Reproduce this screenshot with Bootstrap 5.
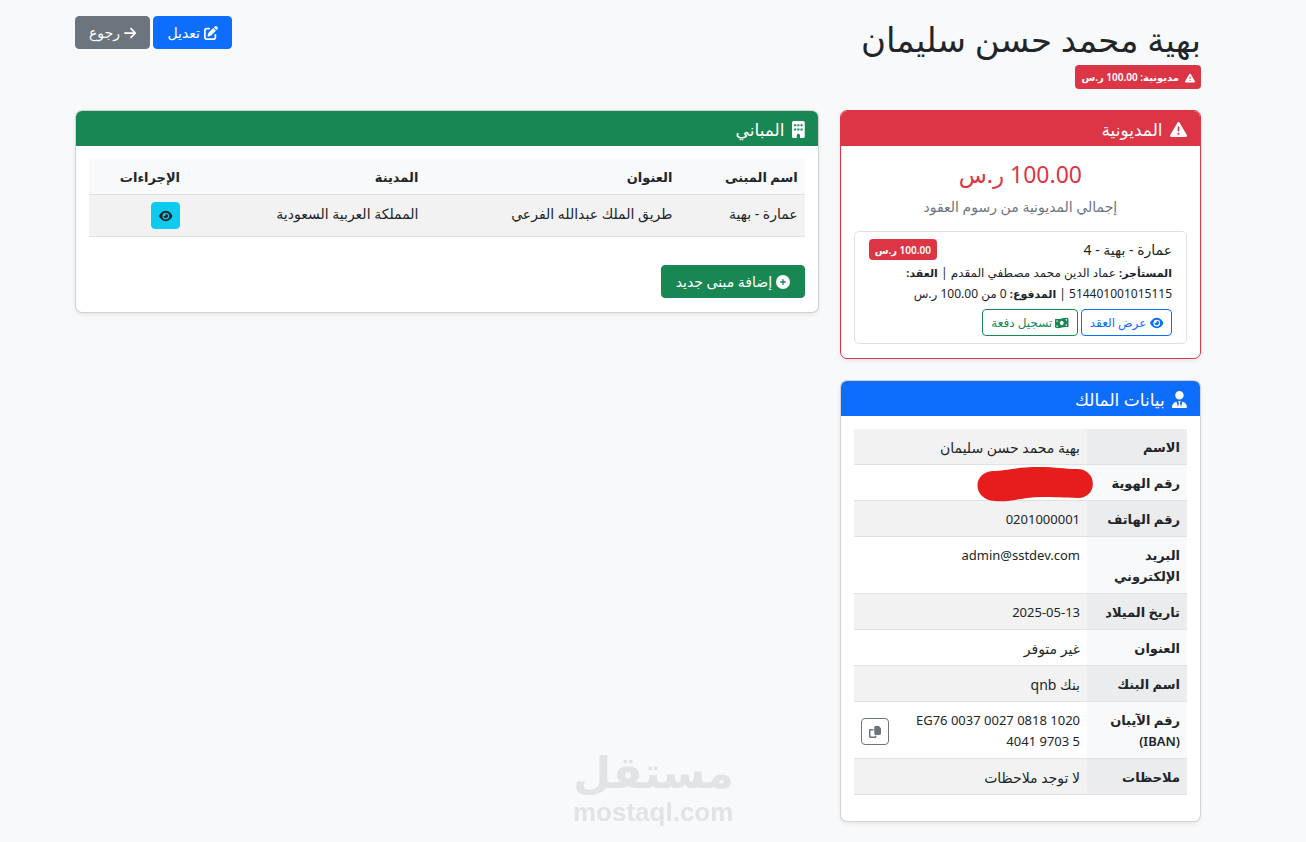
<!DOCTYPE html>
<html lang="ar" dir="rtl">
<head>
<meta charset="utf-8">
<meta name="viewport" content="width=device-width, initial-scale=1">
<title>بهية محمد حسن سليمان</title>
<link href="https://cdn.jsdelivr.net/npm/bootstrap@5.3.0/dist/css/bootstrap.min.css" rel="stylesheet">
<style>
html{font-size:14px}
body{background:#f8f9fb;font-family:"Noto Sans","DejaVu Sans",sans-serif;line-height:21px;text-align:right}
h1,h2,h3{font-weight:400!important}
.page-wrap{padding:16px 105px 20px 75px}
.ico{height:1em;width:auto;fill:currentColor;vertical-align:-2px;overflow:visible}
.owner-name{font-size:34px;line-height:46px;margin-bottom:3px}
.debt-tag{font-size:10px;font-weight:600;line-height:14px;padding:5px 6px;border-radius:4px}
.debt-tag .ico{margin-left:6px}
.btn{line-height:21px;padding:5px 13px;font-size:14px;border-radius:4px}
.btn-add{padding:5px 14px}
.btn-mini{font-size:12px;line-height:19px;padding:3px 7px}
.btn-info{--bs-btn-color:#212529}
.panel{border-radius:7px;box-shadow:0 2px 4px rgba(0,0,0,.075);margin-bottom:21px;overflow:hidden}
.panel .card-header{padding:8px 13px 6px;border:0}
.panel .card-header h2{font-size:17px;line-height:21px;margin:0}
.panel .card-header .ico{margin-left:3px}
.panel .card-body{padding:13px 13px 14px}
.total{font-size:23px;line-height:31px;margin-bottom:6px}
.debt-item{border:1px solid #dee2e6;border-radius:5px;padding:7px 14px}
.debt-note{font-size:12px;line-height:21px;margin:2px 0 5px}
.debt-note strong{font-size:11px}
.debt-actions{gap:3px}
.debt-actions .btn{padding:3px 8px}
.table{margin-bottom:12px}
.table td,.table th{padding:8px 7px 6px}
.table th{font-size:13px;font-weight:600;color:#212529}
.buildings .btn{margin-top:-1px;margin-bottom:1px}
.fields th{width:30%;background-color:#f8f9fb}
.latin{font-size:13px}
.buildings{margin-bottom:28px}
.w-name{width:17.5%}.w-addr{width:35.5%}.w-city{width:33.3%}
.redact{position:absolute;right:-13px;top:-6px;width:116px;height:35px;fill:#e71d1d}
.mark-logo{position:fixed;left:573px;bottom:17px;width:158px;color:#e1e4e4;font-weight:700;text-align:center;direction:ltr}
.mark-ar{font-family:"DejaVu Sans",sans-serif;font-size:44px;line-height:52px}
.mark-en{font-family:"Liberation Sans",sans-serif;font-size:26px;line-height:26px}
</style>
</head>
<body>
<svg width="0" height="0" class="position-absolute" aria-hidden="true">
<symbol id="warn" viewBox="0 0 512 512"><path d="M256 32c14.2 0 27.3 7.5 34.5 19.8l216 368c7.3 12.4 7.3 27.7 .2 40.1S486.3 480 472 480H40c-14.3 0-27.6-7.7-34.7-20.1s-7-27.8 .2-40.1l216-368C228.7 39.5 241.8 32 256 32zm0 128c-13.3 0-24 10.7-24 24V296c0 13.3 10.7 24 24 24s24-10.7 24-24V184c0-13.3-10.7-24-24-24zm32 224a32 32 0 1 0 -64 0 32 32 0 1 0 64 0z"/></symbol>
<symbol id="eye" viewBox="0 0 576 512"><path d="M288 32c-80.8 0-145.5 36.8-192.6 80.6C48.6 156 17.3 208 2.5 243.7c-3.3 7.9-3.3 16.7 0 24.6C17.3 304 48.6 356 95.4 399.4C142.5 443.2 207.2 480 288 480s145.5-36.8 192.6-80.6c46.8-43.5 78.1-95.4 93-131.1c3.3-7.9 3.3-16.7 0-24.6c-14.9-35.7-46.2-87.7-93-131.1C433.5 68.8 368.8 32 288 32zM144 256a144 144 0 1 1 288 0 144 144 0 1 1 -288 0zm144-64c0 35.3-28.7 64-64 64c-7.1 0-13.9-1.2-20.3-3.3c-5.5-1.8-11.9 1.6-11.7 7.4c.3 6.9 1.3 13.8 3.2 20.7c13.7 51.2 66.4 81.6 117.6 67.9s81.6-66.4 67.9-117.6c-11.1-41.5-47.8-69.4-88.6-71.1c-5.8-.2-9.2 6.1-7.4 11.7c2.1 6.4 3.3 13.2 3.3 20.3z"/></symbol>
</svg>
<main class="container-fluid page-wrap">
<header class="d-flex justify-content-between align-items-start mb-4">
<div class="d-flex flex-column align-items-start">
<h1 class="owner-name">بهية محمد حسن سليمان</h1>
<span class="badge text-bg-danger debt-tag"><svg class="ico" viewBox="0 0 512 512"><use href="#warn"/></svg>مديونية: 100.00 ر.س</span>
</div>
<div class="d-flex gap-1">
<button type="button" class="btn btn-primary"><svg class="ico" viewBox="0 0 512 512"><path d="M471.6 21.7c-21.9-21.9-57.3-21.9-79.2 0L362.3 51.7l97.9 97.9 30.1-30.1c21.9-21.9 21.9-57.3 0-79.2L471.6 21.7zm-299.2 220c-6.1 6.1-10.8 13.6-13.5 21.9l-29.6 88.8c-2.9 8.6-.6 18.1 5.8 24.6s15.9 8.7 24.6 5.8l88.8-29.6c8.2-2.7 15.7-7.4 21.9-13.5L437.7 172.3 339.7 74.3 172.4 241.7zM96 64C43 64 0 107 0 160V416c0 53 43 96 96 96H352c53 0 96-43 96-96V320c0-17.7-14.3-32-32-32s-32 14.3-32 32v96c0 17.7-14.3 32-32 32H96c-17.7 0-32-14.3-32-32V160c0-17.7 14.3-32 32-32h96c17.7 0 32-14.3 32-32s-14.3-32-32-32H96z"/></svg> تعديل</button>
<button type="button" class="btn btn-secondary"><svg class="ico" viewBox="0 0 448 512"><path d="M438.6 278.6c12.5-12.5 12.5-32.8 0-45.3l-160-160c-12.5-12.5-32.8-12.5-45.3 0s-12.5 32.8 0 45.3L338.8 224 32 224c-17.7 0-32 14.3-32 32s14.3 32 32 32l306.7 0L233.4 393.4c-12.5 12.5-12.5 32.8 0 45.3s32.8 12.5 45.3 0l160-160z"/></svg> رجوع</button>
</div>
</header>
<div class="row">
<div class="col-4">
<section class="card panel border-danger">
<div class="card-header text-bg-danger"><h2><svg class="ico" viewBox="0 0 512 512"><use href="#warn"/></svg> المديونية</h2></div>
<div class="card-body">
<div class="text-center mb-3"><h3 class="total text-danger">100.00 ر.س</h3><p class="text-secondary mb-0">إجمالي المديونية من رسوم العقود</p></div>
<div class="debt-item">
<div class="d-flex justify-content-between"><span>عمارة - بهية - 4</span><span class="badge text-bg-danger debt-tag py-1">100.00 ر.س</span></div>
<p class="debt-note"><strong>المستأجر:</strong> عماد الدين محمد مصطفي المقدم | <strong>العقد:</strong> 514401001015115 | <strong>المدفوع:</strong> 0 من 100.00 ر.س</p>
<div class="d-flex debt-actions">
<button type="button" class="btn btn-mini btn-outline-primary"><svg class="ico" viewBox="0 0 576 512"><use href="#eye"/></svg> عرض العقد</button>
<button type="button" class="btn btn-mini btn-outline-success"><svg class="ico" viewBox="0 0 576 512"><path d="M0 112.5V422.3c0 18 10.1 35 27 41.3c87 32.5 174 10.3 261-11.9c79.8-20.3 159.6-40.7 239.3-18.9c23 6.3 48.7-9.5 48.7-33.4V89.7c0-18-10.1-35-27-41.3C462 15.9 375 38.1 288 60.3C208.2 80.6 128.4 100.9 48.7 79.1C25.6 72.8 0 88.6 0 112.5zM288 352c-44.2 0-80-43-80-96s35.8-96 80-96s80 43 80 96s-35.8 96-80 96zM64 352c35.3 0 64 28.7 64 64H64V352zm64-208c0 35.3-28.7 64-64 64V144h64zM512 304v64H448c0-35.3 28.7-64 64-64zM448 96h64v64c-35.3 0-64-28.7-64-64z" fill-rule="evenodd"/></svg> تسجيل دفعة</button>
</div>
</div>
</div>
</section>
<section class="card panel mb-0">
<div class="card-header text-bg-primary"><h2><svg class="ico" viewBox="0 0 448 512"><path d="M96 128a128 128 0 1 0 256 0A128 128 0 1 0 96 128zm94.5 200.2l18.6 31L175.8 483.1l-36-146.9c-2-8.1-9.8-13.4-17.9-11.3C51.9 342.4 0 405.8 0 481.3c0 17 13.8 30.7 30.7 30.7H417.3c17 0 30.7-13.8 30.7-30.7c0-75.5-51.9-138.9-121.9-156.4c-8.1-2-15.9 3.3-17.9 11.3l-36 146.9L238.9 359.2l18.6-31c6.4-10.7-1.3-24.2-13.7-24.2H204.3c-12.4 0-20.1 13.6-13.7 24.2z"/></svg> بيانات المالك</h2></div>
<div class="card-body">
<table class="table table-striped fields">
<tbody>
<tr><th scope="row">الاسم</th><td>بهية محمد حسن سليمان</td></tr>
<tr><th scope="row">رقم الهوية</th><td><div class="position-relative">&nbsp;<svg class="redact" viewBox="0 0 116 35"><path d="M16 4C28 4 38 0 62 0C80 0 86 2 100 2C121 2 121 31 101 31C80 31 66 29 50 31C36 33 30 35 18 34C-5 33 -5 5 16 4Z"/></svg></div></td></tr>
<tr><th scope="row">رقم الهاتف</th><td class="latin">0201000001</td></tr>
<tr><th scope="row">البريد الإلكتروني</th><td class="latin">admin@sstdev.com</td></tr>
<tr><th scope="row">تاريخ الميلاد</th><td class="latin">2025-05-13</td></tr>
<tr><th scope="row">العنوان</th><td>غير متوفر</td></tr>
<tr><th scope="row">اسم البنك</th><td>بنك qnb</td></tr>
<tr><th scope="row">رقم الآيبان (IBAN)</th><td><div class="d-flex justify-content-between align-items-center"><span class="latin">EG76 0037 0027 0818 1020 4041 9703 5</span><button type="button" class="btn btn-mini btn-outline-secondary" aria-label="نسخ"><svg class="ico" viewBox="0 0 512 512"><path d="M272 0H396c13 0 25 5 34 14l68 68c9 9 14 21 14 34V320c0 35-29 64-64 64H288c-35 0-64-29-64-64V48c0-26 22-48 48-48zM64 128H192v64H64V448H256V416h64v32c0 35-29 64-64 64H64c-35 0-64-29-64-64V192c0-35 29-64 64-64z"/></svg></button></div></td></tr>
<tr><th scope="row">ملاحظات</th><td>لا توجد ملاحظات</td></tr>
</tbody>
</table>
</div>
</section>
</div>
<div class="col-8">
<section class="card panel">
<div class="card-header text-bg-success"><h2><svg class="ico" viewBox="0 0 384 512"><path fill-rule="evenodd" d="M48 0H336a48 48 0 0 1 48 48V464a48 48 0 0 1-48 48H240V432a48 48 0 0 0-96 0V512H48a48 48 0 0 1-48-48V48A48 48 0 0 1 48 0zM64 96v64h64V96zm96 0v64h64V96zm96 0v64h64V96zM64 224v64h64V224zm96 0v64h64V224zm96 0v64h64V224z"/></svg> المباني</h2></div>
<div class="card-body">
<table class="table table-striped buildings">
<thead class="table-light"><tr><th class="w-name">اسم المبنى</th><th class="w-addr">العنوان</th><th class="w-city">المدينة</th><th>الإجراءات</th></tr></thead>
<tbody><tr><td>عمارة - بهية</td><td>طريق الملك عبدالله الفرعي</td><td>المملكة العربية السعودية</td><td><button type="button" class="btn btn-mini btn-info" aria-label="عرض"><svg class="ico" viewBox="0 0 576 512"><use href="#eye"/></svg></button></td></tr></tbody>
</table>
<button type="button" class="btn btn-success btn-add"><svg class="ico" viewBox="0 0 512 512"><path d="M256 512A256 256 0 1 0 256 0a256 256 0 1 0 0 512zM232 344V280H168c-13.3 0-24-10.7-24-24s10.7-24 24-24h64V168c0-13.3 10.7-24 24-24s24 10.7 24 24v64h64c13.3 0 24 10.7 24 24s-10.7 24-24 24H280v64c0 13.3-10.7 24-24 24s-24-10.7-24-24z"/></svg> إضافة مبنى جديد</button>
</div>
</section>
</div>
</div>
</main>
<div class="mark-logo"><div class="mark-ar">مستقل</div><div class="mark-en">mostaql.com</div></div>
<script src="https://cdn.jsdelivr.net/npm/bootstrap@5.3.0/dist/js/bootstrap.bundle.min.js"></script>
</body>
</html>
